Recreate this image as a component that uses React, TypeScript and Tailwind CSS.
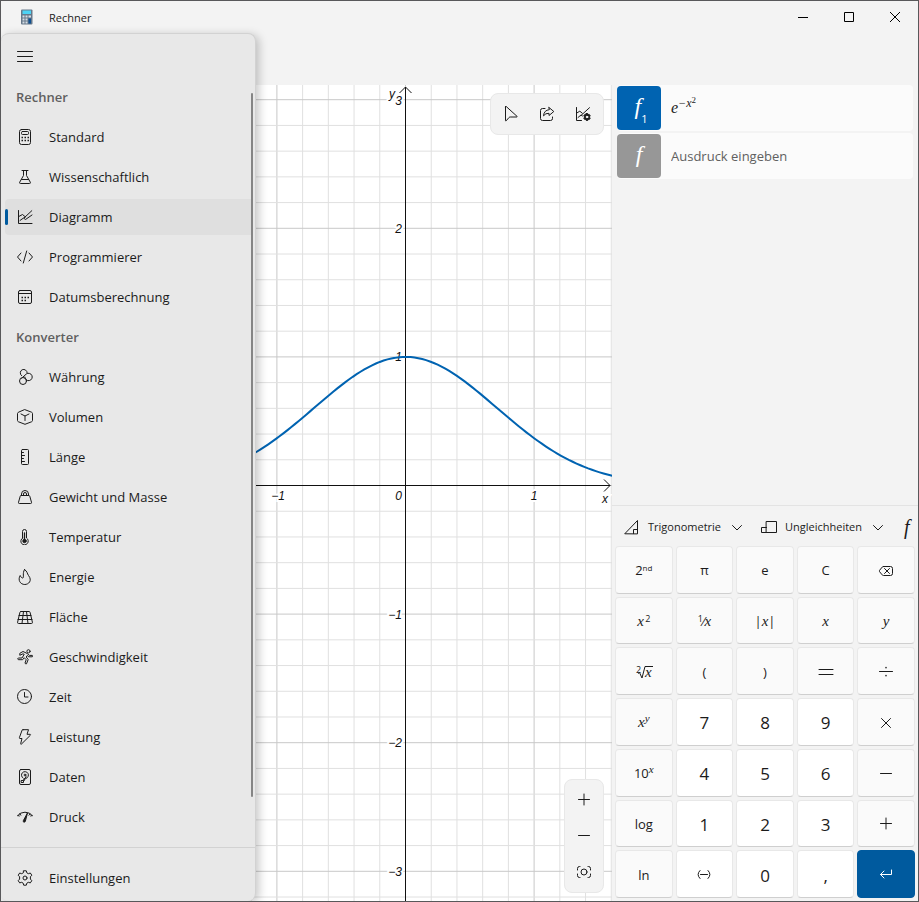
import type { ReactNode } from 'react'
import clsx from 'clsx'

const SERIF = "font-['Liberation_Serif',serif]"

function Icon({ children, size = 16 }: { children: ReactNode; size?: number }) {
  return (
    <svg
      width={size}
      height={size}
      viewBox="0 0 16 16"
      fill="none"
      stroke="currentColor"
      strokeWidth={1}
      strokeLinecap="round"
      strokeLinejoin="round"
      className="shrink-0"
      aria-hidden="true"
    >
      {children}
    </svg>
  )
}

type NavItem = { label: string; icon: ReactNode; active?: boolean }

const calculators: NavItem[] = [
  {
    label: 'Standard',
    icon: (
      <>
        <rect x="2.5" y="0.5" width="11" height="15" rx="2" />
        <rect x="4.5" y="2.5" width="7" height="3" rx="1" />
        <path d="M4.5 8.5h1.500M7.5 8.5h1.500M10.5 8.5h1.500M4.5 11.5h1.500M7.5 11.5h1.500M10.5 11.5h1.500" strokeLinecap="butt" strokeWidth="1.6" />
      </>
    ),
  },
  {
    label: 'Wissenschaftlich',
    icon: <path d="M5 1.5h6M6.5 1.5v5L2.7 13.2q-.5 1.3.8 1.3h9q1.3 0 .8-1.3L9.5 6.5v-5M4.500 10.500h7" />,
  },
  {
    label: 'Diagramm',
    active: true,
    icon: (
      <>
        <path d="M1.5 1.5v13h13.5" />
        <path d="M1.8 7.5l3.7-2 3 2.5M3 11.5L6.5 9l2 1.5 6.5-4.5M7 9L14.8 1.7" />
      </>
    ),
  },
  { label: 'Programmierer', icon: <path d="M4 4L.5 8 4 12M12 4l3.5 4-3.5 4M9.7 2L6.3 14" /> },
  {
    label: 'Datumsberechnung',
    icon: (
      <>
        <rect x="1.5" y="1.5" width="13" height="13" rx="1.5" />
        <path d="M1.5 4.5h13" />
        <path d="M4.5 8.500h1.500M7.5 8.500h1.500M10.5 8.500h1.500M4.5 11.500h1.500M7.5 11.500h1.500" strokeWidth="1.6" strokeLinecap="butt" />
      </>
    ),
  },
]

const converters: NavItem[] = [
  {
    label: 'Währung',
    icon: (
      <>
        <path d="M4.6 6.7A3.5 3.5 0 1 1 10.2 4M7.8 8a3.7 3.7 0 1 0 1.5-3L4.6 9.2" />
        <circle cx="6" cy="12" r="3.5" />
      </>
    ),
  },
  { label: 'Volumen', icon: <path d="M8 .7l6.5 2.500q1 .4 1 1.300v7q0 .9-1 1.300L8 15.300 1.500 12.800q-1-.4-1-1.300v-7q0-.9 1-1.300zM4 5l4 2 4-2M8 7v4.500" /> },
  {
    label: 'Länge',
    icon: (
      <>
        <rect x="4.5" y="0.5" width="7" height="15" rx="1" />
        <path d="M4.5 3.5h2M4.5 6.5h3M4.5 9.5h2M4.5 12.5h3" />
      </>
    ),
  },
  {
    label: 'Gewicht und Masse',
    icon: (
      <>
        <path d="M4.2 6.5h7.6q.8 0 1 .8l1.7 6q.3 1.2-.8 1.2H2.3q-1.1 0-.8-1.2l1.7-6q.2-.8 1-.8z" />
        <path d="M4.5 6.500V5a3.500 3.500 0 0 1 7 0v1.500M6.500 6.300V5a1.500 1.500 0 0 1 3 0v1.300" />
      </>
    ),
  },
  {
    label: 'Temperatur',
    icon: (
      <>
        <path d="M5.5 9V2.5a2 2 0 0 1 4 0V9a3.7 3.7 0 1 1-4 0z" />
        <circle cx="7.5" cy="12" r="1.7" fill="currentColor" />
        <path d="M7.5 4v8" strokeWidth="1.3" />
      </>
    ),
  },
  {
    label: 'Energie',
    icon: <path d="M7.5.6c3 1.500 2.500 4 4 5.900 4.200 5.200 0 9-3.700 9-4.500 0-7.300-4.500-4.600-9 .8 1.800 1.600 2.500 2.500 2.500C7.500 8.700 5 4.500 7.500.6z" />,
  },
  { label: 'Fläche', icon: <path d="M4 2.5h8q.9 0 1.1.9l2.3 9.8q.2 1.3-.9 1.3h-13q-1.100 0-.9-1.300L2.900 3.400Q3.100 2.500 4 2.500zM2 6.500h12M1 10.500h14M6.500 2.500L5 14.500M9.500 2.500l1.500 12" /> },
  {
    label: 'Geschwindigkeit',
    icon: (
      <>
        <circle cx="11.5" cy="2.3" r="1.6" />
        <path d="M9.800 4.300L6 2.500 2.800 4.300v2L6 4.800l1.200.5L5 9H1.300q-1.300.8 0 1.700h4.400l1.500-2 2 2L8 14q.4 1.300 1.500.8l1.700-4.300-2-2.500 1-1.500 1.600 1.300h3.500q.8-.8 0-1.400h-2.500z" />
      </>
    ),
  },
  {
    label: 'Zeit',
    icon: (
      <>
        <circle cx="7.5" cy="7.5" r="7" />
        <path d="M7.5 3.5v4.500h3.500" />
      </>
    ),
  },
  { label: 'Leistung', icon: <path d="M6 .7h5.500L10 5.300h3.200q.7.300.1 1L4.500 15q-1 .6-.8-.5L5 9.500H3q-.8 0-.6-.9L5 1.400Q5.300.7 6 .7z" /> },
  {
    label: 'Daten',
    icon: (
      <>
        <rect x="2.5" y="0.5" width="11" height="15" rx="1.5" />
        <path d="M6.2 9.2A3.5 3.5 0 1 1 9 9.5" />
        <circle cx="8" cy="6" r="0.9" />
        <path d="M7.8 9.3L5.8 11.7M4.5 11.5h2v2h-2zM9 7.5l-1.7 4" />
      </>
    ),
  },
  {
    label: 'Druck',
    icon: (
      <>
        <path d="M.7 6.5Q3.500 3.200 8 3.200t7.300 3.300M2.800 4.500l1 1.700M13 5l-1 1.200M15.200 6.500l-1.500.5M.8 6.500l1.500.5" />
        <path d="M10.3 4.3L6.3 11.7a1 1 0 0 0 1.9.9z" fill="currentColor" />
      </>
    ),
  },
]

const gear = (
  <>
    <path d="M6.7.8h2.600l.5 2 1.500.9 2-.7 1.500 2.200-1.400 1.600v2.300l1.400 1.600-1.500 2.200-2-.6-1.500.9-.5 2H6.700l-.5-2-1.500-.9-2 .6-1.500-2.200 1.400-1.600V6.800L1.200 5.200 2.700 3l2 .7 1.500-.9z" />
    <circle cx="8" cy="8" r="2" />
  </>
)

function NavEntry({ label, icon, active }: NavItem) {
  return (
    <button
      type="button"
      className={clsx('relative my-0.5 flex h-9 w-full shrink-0 items-center gap-4 rounded-l pl-3 text-left', active && 'bg-[#dfdfdf]')}
    >
      {active && <span className="absolute left-0 top-2.5 h-4 w-[3px] rounded-full bg-[#005a9e]" />}
      <Icon>{icon}</Icon>
      <span className="pt-0.5">{label}</span>
    </button>
  )
}

function NavHeading({ children }: { children: ReactNode }) {
  return <h2 className="flex h-10 shrink-0 items-center pl-[11px] pt-0.5 font-semibold text-[#5f5f5f]">{children}</h2>
}

function Sidebar() {
  return (
    <nav className="relative z-10 -mr-2 flex w-[255px] shrink-0 flex-col rounded-lg border-r border-t border-[#d2d2d2] bg-[#e8e8e8] text-[13px] shadow-[3px_2px_10px_rgba(0,0,0,0.22)]">
      <button type="button" aria-label="Navigation schließen" className="flex h-[43px] w-12 shrink-0 items-center pl-4">
        <Icon>
          <path d="M.5 3.5h15M.5 8.5h15M.5 13.5h15" />
        </Icon>
      </button>
      <div className="flex min-h-0 flex-1">
        <div className="flex flex-1 flex-col overflow-hidden pl-1">
          <NavHeading>Rechner</NavHeading>
          {calculators.map((item) => (
            <NavEntry key={item.label} {...item} />
          ))}
          <NavHeading>Konverter</NavHeading>
          {converters.map((item) => (
            <NavEntry key={item.label} {...item} />
          ))}
        </div>
        <div className="mb-[50px] mr-0.5 mt-4 w-0.5 rounded-full bg-[#858585]" />
      </div>
      <div className="flex h-[54px] shrink-0 items-center border-t border-[#d2d2d2] pl-1 pt-1.5">
        <NavEntry label="Einstellungen" icon={gear} />
      </div>
    </nav>
  )
}

// Ursprung und Einheit des Koordinatensystems
const OX = 157.5
const OY = 400.5
const UNIT = 128.6
const W = 364
const H = 816

const px = (x: number) => OX + x * UNIT
const py = (y: number) => OY - y * UNIT

const xTicks = Array.from({ length: 15 }, (_, i) => i - 6)
const yTicks = Array.from({ length: 32 }, (_, i) => i - 16)

const curve = Array.from({ length: 100 }, (_, i) => {
  const x = -1.25 + i * 0.03
  return `${i ? 'L' : 'M'}${px(x).toFixed(2)} ${py(Math.exp(-x * x)).toFixed(2)}`
}).join('')

const axisLabels = [
  { text: '3', x: 154, y: 20, anchor: 'end' },
  { text: '2', x: 154, y: 148, anchor: 'end' },
  { text: '1', x: 154, y: 276, anchor: 'end' },
  { text: '−1', x: 154, y: 534, anchor: 'end' },
  { text: '−2', x: 154, y: 662, anchor: 'end' },
  { text: '−3', x: 154, y: 791, anchor: 'end' },
  { text: '−1', x: 30, y: 415, anchor: 'middle' },
  { text: '0', x: 154, y: 415, anchor: 'end' },
  { text: '1', x: 286, y: 415, anchor: 'middle' },
  { text: 'y', x: 147, y: 13, anchor: 'end' },
  { text: 'x', x: 360, y: 418, anchor: 'end' },
] as const

function Graph() {
  return (
    <svg
      viewBox={`0 0 ${W} ${H}`}
      preserveAspectRatio="xMidYMid slice"
      className="block h-full w-full bg-white"
      role="img"
      aria-label="Diagramm"
    >
      {xTicks.map((t) => (
        <path key={`x${t}`} d={`M${px(t / 5)} 0V${H}`} stroke={t % 5 ? '#e0e0e0' : '#c8c8c8'} />
      ))}
      {yTicks.map((t) => (
        <path key={`y${t}`} d={`M0 ${py(t / 5)}H${W}`} stroke={t % 5 ? '#e0e0e0' : '#c8c8c8'} />
      ))}
      <g
        className="font-['Liberation_Sans',sans-serif] text-[12px] italic"
        fill="#111"
        stroke="#fff"
        strokeWidth="4"
        paintOrder="stroke"
      >
        {axisLabels.map((l) => (
          <text key={`${l.x}-${l.y}`} x={l.x} y={l.y} textAnchor={l.anchor}>
            {l.text}
          </text>
        ))}
      </g>
      <g fill="none" stroke="#111">
        <path d={`M${OX} 2V${H}M151.5 8l6-6 6 6`} />
        <path d={`M0 ${OY}H362M356 394.5l6 6-6 6`} />
      </g>
      <path d={curve} fill="none" stroke="#0063b1" strokeWidth="2" />
    </svg>
  )
}

function ToolButton({ label, children, className }: { label: string; children: ReactNode; className?: string }) {
  return (
    <button type="button" aria-label={label} className={clsx('flex h-9 items-center justify-center', className)}>
      <Icon>{children}</Icon>
    </button>
  )
}

function GraphArea() {
  return (
    <section className="relative min-w-0 flex-1 overflow-hidden">
      <Graph />
      <div className="absolute right-2 top-2 flex rounded-lg border border-[#e8e8e8] bg-[#f3f3f3] p-0.5">
        <ToolButton label="Ablaufverfolgung" className="w-9">
          <path d="M2.500.8v13.800q.1.700.7.200L6 11.500q.5-.5 1.200-.5h6.600q.8-.1.200-.7L3.200.5q-.6-.3-.7.300z" />
        </ToolButton>
        <ToolButton label="Teilen" className="w-9">
          <path d="M6 2.5H3.500q-2 0-2 2v8q0 2 2 2h8q2 0 2-2V11" />
          <path d="M10 1.500L14.800 5.500 10 9.500V7.300Q6.500 7 4.500 9.800 5 4.200 10 3.700z" />
        </ToolButton>
        <ToolButton label="Diagrammoptionen" className="w-9">
          <path d="M1.5 1.5v13h5M1.8 7l3-1.8 2.5 2M3 11.5L6 9l1.5 1M6 9.5L14.5 1.7" />
          <path d="M11.3 7.5h1.4l.4 1.200 1.200-.2.9 1.300-.9 1.200.9 1.200-.9 1.300-1.200-.2-.4 1.200h-1.400l-.4-1.200-1.200.2-.9-1.300.9-1.200-.9-1.200.9-1.300 1.200.2z" fill="currentColor" />
          <circle cx="12" cy="11" r="0.8" fill="#fff" stroke="#fff" />
        </ToolButton>
      </div>
      <div className="absolute bottom-2 right-2 flex w-10 flex-col rounded-lg border border-[#e8e8e8] bg-[#f3f3f3] p-0.5">
        <ToolButton label="Vergrößern">
          <path d="M2.5 7.500h11M8 2v11" />
        </ToolButton>
        <ToolButton label="Verkleinern">
          <path d="M2.5 7.500h11" />
        </ToolButton>
        <ToolButton label="Ansicht anpassen">
          <circle cx="8" cy="8" r="3" />
          <path d="M4 2.5H3.500q-2 0-2 2V6M1.500 10v1.500q0 2 2 2H4M12 2.500h.5q2 0 2 2V6M14.500 10v1.500q0 2-2 2H12" />
        </ToolButton>
      </div>
    </section>
  )
}

function FunctionRow({ color, index, children }: { color: string; index?: string; children: ReactNode }) {
  return (
    <div className="flex h-[46px] items-center gap-2.5 rounded bg-[#fbfbfb]">
      <button type="button" aria-label="Funktion" className={clsx('flex size-11 shrink-0 items-center justify-center rounded text-white', color, index && 'pl-1')}>
        <span className={clsx(SERIF, 'pb-1 text-[24px] italic leading-none')}>f</span>
        {index && <sub className="mt-4 text-[11px]">{index}</sub>}
      </button>
      {children}
    </div>
  )
}

function MenuButton({ icon, label }: { icon: ReactNode; label: string }) {
  return (
    <button type="button" className="flex shrink-0 items-center gap-2 text-[11px]">
      <Icon>{icon}</Icon>
      <span>{label}</span>
      <Icon>
        <path d="M3.5 6.5L8 11l4.500-4.500" />
      </Icon>
    </button>
  )
}

function X({ children = 'x' }: { children?: string }) {
  return <i className={clsx(SERIF, 'text-[15px]')}>{children}</i>
}

function Sup({ children, serif }: { children: ReactNode; serif?: boolean }) {
  return <sup className={clsx(serif ? `${SERIF} text-[11px] italic` : 'text-[9px]')}>{children}</sup>
}

type Key = { id: string; face: ReactNode; kind?: 'digit' | 'enter' }

const digit = (d: string): Key => ({ id: d, face: <span className="text-[17px]">{d}</span>, kind: 'digit' })

const keys: Key[] = [
  { id: 'Zweitfunktion', face: <span>2<sup className="text-[8px]">nd</sup></span> },
  { id: 'Pi', face: 'π' },
  { id: 'Eulersche Zahl', face: 'e' },
  { id: 'Löschen', face: 'C' },
  {
    id: 'Rücktaste',
    face: (
      <Icon>
        <path d="M5.500 3.500h7q2 0 2 2v5q0 2-2 2h-7q-.8 0-1.300-.6L1.600 8.700q-.5-.7 0-1.400l2.600-3.200q.5-.6 1.300-.6zM6.500 5.500l5 5M11.500 5.500l-5 5" />
      </Icon>
    ),
  },
  { id: 'Quadrat', face: <span><X />&#8202;<Sup>2</Sup></span> },
  { id: 'Kehrwert', face: <span><Sup>1</Sup>⁄<X /></span> },
  { id: 'Absolutwert', face: <span>|<X />|</span> },
  { id: 'Variable x', face: <X /> },
  { id: 'Variable y', face: <X>y</X> },
  {
    id: 'Quadratwurzel',
    face: (
      <span className="flex items-end">
        <span className="-mr-1 self-start text-[9px]">2</span>
        <svg width="16" height="14" fill="none" stroke="currentColor" className="-mr-2" aria-hidden="true">
          <path d="M1 8.500l1.500-1L5 13 8 1.500h8" />
        </svg>
        <i className={clsx(SERIF, 'text-[15px] leading-[14px]')}>x</i>
      </span>
    ),
  },
  { id: 'Klammer auf', face: '(' },
  { id: 'Klammer zu', face: ')' },
  { id: 'Gleich', face: <Icon><path d="M1 5.5h14M1 10.5h14" /></Icon> },
  {
    id: 'Geteilt',
    face: (
      <Icon>
        <path d="M1.5 7.500h13" />
        <path d="M8 3.500v.2M8 11.500v.2" strokeWidth="1.5" />
      </Icon>
    ),
  },
  { id: 'Potenz', face: <span><X /><Sup serif>y</Sup></span> },
  digit('7'),
  digit('8'),
  digit('9'),
  { id: 'Mal', face: <Icon><path d="M3.5 3.5l9 9M12.5 3.5l-9 9" /></Icon> },
  { id: 'Zehnerpotenz', face: <span>10<Sup serif>x</Sup></span> },
  digit('4'),
  digit('5'),
  digit('6'),
  { id: 'Minus', face: <Icon><path d="M2.5 7.500h11" /></Icon> },
  { id: 'Logarithmus', face: 'log' },
  digit('1'),
  digit('2'),
  digit('3'),
  { id: 'Plus', face: <Icon><path d="M2.5 7.500h11M8 2v11" /></Icon> },
  { id: 'Natürlicher Logarithmus', face: 'ln' },
  {
    id: 'Vorzeichen',
    face: (
      <Icon>
        <path d="M4 3.500q-4 4 0 8M12 3.500q4 4 0 8M4.500 7.500h7" />
      </Icon>
    ),
    kind: 'digit',
  },
  digit('0'),
  digit(','),
  { id: 'Eingabe', face: <Icon><path d="M13.5 4v4.500H2.500M6 5L2.500 8.500 6 12" /></Icon>, kind: 'enter' },
]

function Keypad() {
  return (
    <div className="mx-[3px] mb-[3px] grid h-[352px] shrink-0 grid-cols-5 grid-rows-7 gap-[3px]">
      {keys.map(({ id, face, kind }) => (
        <button
          key={id}
          type="button"
          aria-label={id}
          className={clsx(
            'flex items-center justify-center whitespace-nowrap rounded border text-[13px] leading-none',
            kind === 'enter' && 'border-[#005a9e] bg-[#005a9e] text-white',
            kind === 'digit' && 'border-[#e8e8e8] border-b-[#cfcfcf] bg-white pt-0.5',
            !kind && 'border-[#e8e8e8] border-b-[#cfcfcf] bg-[#fafafa] pt-0.5',
          )}
        >
          {face}
        </button>
      ))}
    </div>
  )
}

function EquationPanel() {
  return (
    <aside className="flex w-1/2 max-w-[306px] shrink-0 flex-col">
      <div className="flex flex-1 flex-col gap-0.5 px-[5px]">
        <FunctionRow color="bg-[#0063b1]" index="1">
          <span className={clsx(SERIF, 'text-[16px] italic')}>
            e<sup className="text-[12px]">−x<sup className="text-[9px] not-italic">2</sup></sup>
          </span>
        </FunctionRow>
        <FunctionRow color="bg-[#979797]">
          <input
            type="text"
            aria-label="Ausdruck eingeben"
            placeholder="Ausdruck eingeben"
            className="min-w-0 flex-1 bg-transparent pt-0.5 text-[13px] outline-none placeholder:text-[#606060]"
          />
        </FunctionRow>
      </div>
      <div className="flex h-[41px] shrink-0 items-center gap-4 overflow-hidden border-t border-[#e3e3e3] pl-3 pt-0.5">
        <MenuButton label="Trigonometrie" icon={<path d="M1 14.5L13.500 1.500v13zM9.500 14.500v-4h4" />} />
        <MenuButton label="Ungleichheiten" icon={<path d="M5.5 2.5h10v11h-10zM5.500 8.500h-5v5h5" />} />
        <button type="button" aria-label="Funktion" className={clsx(SERIF, 'shrink-0 pl-0.5 text-[20px] italic')}>
          f
        </button>
      </div>
      <Keypad />
    </aside>
  )
}

function TitleBar() {
  return (
    <header className="flex h-8 shrink-0 items-center pl-[18px] text-[11px]">
      <svg width="16" height="16" viewBox="0 0 16 16" aria-hidden="true">
        <rect x="2" y="0.5" width="11.5" height="15" rx="1" fill="#66788a" />
        <rect x="3.5" y="1.5" width="8.5" height="3.5" fill="#4cd3f5" />
        <path d="M3.5 6.5h2v2h-2zM6.500 6.500h2v2h-2zM9.500 6.500h2.500v2H9.500zM3.500 9.500h2v2h-2zM6.500 9.500h2v2h-2zM3.500 12.500h2v2h-2zM6.500 12.500h2v2h-2z" fill="#d5dde5" />
        <path d="M9.5 9.5h2.500v5H9.500z" fill="#0c4f91" />
      </svg>
      <h1 className="ml-3.5 flex-1 pt-0.5">Rechner</h1>
      <button type="button" aria-label="Minimieren" className="flex h-8 w-[46px] items-center justify-center text-black">
        <svg width="10" height="10" stroke="currentColor" fill="none"><path d="M0 5.5h10" /></svg>
      </button>
      <button type="button" aria-label="Maximieren" className="flex h-8 w-[46px] items-center justify-center text-black">
        <svg width="10" height="10" stroke="currentColor" fill="none"><path d="M.5.5h9v9h-9z" /></svg>
      </button>
      <button type="button" aria-label="Schließen" className="flex h-8 w-[46px] items-center justify-center text-black">
        <svg width="10" height="10" stroke="currentColor" fill="none"><path d="M0 0l10 10M10 0L0 10" /></svg>
      </button>
    </header>
  )
}

export default function App() {
  return (
    <div className="flex h-screen flex-col overflow-hidden border border-[#58585a] bg-[#f3f3f3] font-['Open_Sans',sans-serif] text-[#1b1b1b]">
      <TitleBar />
      <div className="flex min-h-0 flex-1">
        <Sidebar />
        <main className="flex min-w-0 flex-1 flex-col pt-[52px]">
          <div className="flex min-h-0 flex-1">
            <GraphArea />
            <EquationPanel />
          </div>
        </main>
      </div>
    </div>
  )
}
